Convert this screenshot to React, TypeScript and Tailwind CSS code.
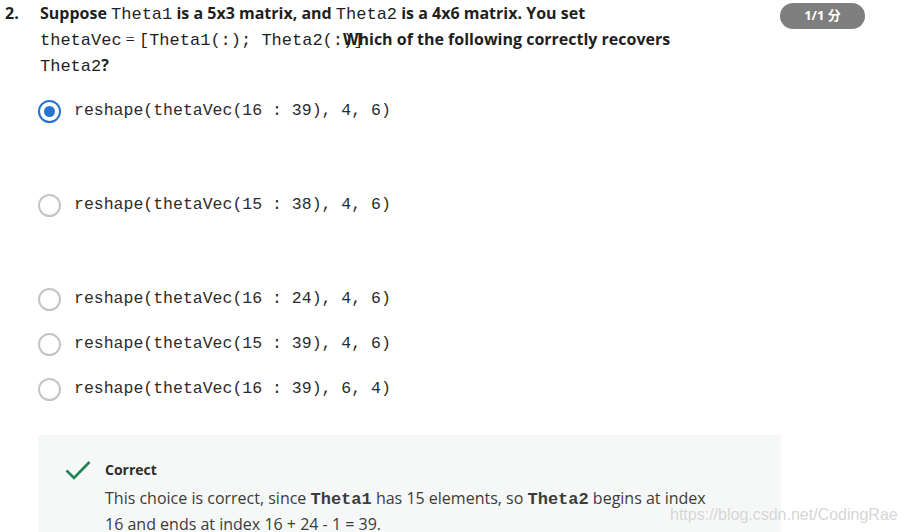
import React from 'react';

const OPTIONS = [
  { id: 'a', text: ['16', '39', '4', '6'], selected: true, extra: true },
  { id: 'b', text: ['15', '38', '4', '6'], selected: false, extra: true },
  { id: 'c', text: ['16', '24', '4', '6'], selected: false, extra: false },
  { id: 'd', text: ['15', '39', '4', '6'], selected: false, extra: false },
  { id: 'e', text: ['16', '39', '6', '4'], selected: false, extra: false },
];

function Mono({ children, bold = false }: { children: React.ReactNode; bold?: boolean }) {
  return (
    <span className={`font-['Liberation_Mono',monospace] text-[17px] ${bold ? 'font-bold' : 'font-normal'}`}>
      {children}
    </span>
  );
}

function Radio({ selected }: { selected: boolean }) {
  if (selected) {
    return (
      <span className="flex h-[23px] w-[23px] shrink-0 items-center justify-center rounded-full border-[2.5px] border-[#2a73cc]">
        <span className="h-[11px] w-[11px] rounded-full bg-[#2a73cc]" />
      </span>
    );
  }
  return <span className="h-[23px] w-[23px] shrink-0 rounded-full border-2 border-[#c4c4c4]" />;
}

export default function App() {
  return (
    <div className="relative h-[532px] w-[907px] overflow-hidden bg-white font-['Open_Sans','Noto_Sans_CJK_SC',sans-serif] text-[#1f1f1f]">
      <div className="flex pt-[1px]">
        <div className="w-[40px] shrink-0 pl-[5px] text-[16px] font-bold leading-[25px]">2.</div>
        <div className="w-[680px] shrink-0 text-[16px] font-bold leading-[25px] text-[#1f1f1f]">
          Suppose <Mono>Theta1</Mono> is a 5x3 matrix, and <Mono>Theta2</Mono> is a 4x6 matrix. You set{' '}
          <span className="whitespace-nowrap">
            <Mono>thetaVec</Mono> <span className="font-['Liberation_Serif',serif] font-normal">=</span>{' '}
            <Mono>[Theta1(:);&nbsp;Theta2(:</Mono>
            <span className="inline-block w-0 overflow-visible">
              <Mono>)]</Mono>
            </span>
          </span>
          Which of the following correctly recovers <Mono>Theta2</Mono>?
        </div>
        <div className="ml-[60px] mt-[2px] flex h-[26px] w-[85px] items-center justify-center rounded-full bg-[#7f7f7f] text-[13px] font-bold text-white">
          1/1 分
        </div>
      </div>

      <div className="mt-[20px] flex flex-col pl-[38px]">
        {OPTIONS.map((o) => (
          <div key={o.id} className={`flex h-[24px] items-center gap-[13px] ${o.extra ? 'mb-[70px]' : 'mb-[21px]'}`}>
            <Radio selected={o.selected} />
            <span className="font-['Liberation_Mono',monospace] text-[16.5px] text-[#2b2b2b] whitespace-pre">
              {`reshape(thetaVec(${o.text[0]} : ${o.text[1]}), ${o.text[2]}, ${o.text[3]})`}
            </span>
          </div>
        ))}
      </div>

      <div className="ml-[38px] mt-[13px] w-[743px] bg-[#f5f8f7] pb-[20px] pl-[27px] pt-[25px]">
        <div className="flex items-center gap-[14px]">
          <svg width="26" height="20" viewBox="0 0 26 20" className="shrink-0">
            <path d="M1.5 10.5 L9 18 L24.5 2" fill="none" stroke="#1f8354" strokeWidth="2.6" />
          </svg>
          <span className="text-[14px] font-bold leading-[20px] text-[#2d2d2d]">Correct</span>
        </div>
        <p className="ml-[40px] mt-[6px] w-[612px] text-[16px] leading-[25px] text-[#3b3b3b]">
          This choice is correct, since <Mono bold>Theta1</Mono> has 15 elements, so <Mono bold>Theta2</Mono> begins at index 16 and ends at index 16 + 24 - 1 = 39.
        </p>
      </div>

      <div className="absolute left-[670px] top-[503px] font-['Liberation_Sans',sans-serif] text-[16px] text-[#d6d6d6] [text-shadow:0_0_1px_#ffffff]">
        https://blog.csdn.net/CodingRae
      </div>
    </div>
  );
}
